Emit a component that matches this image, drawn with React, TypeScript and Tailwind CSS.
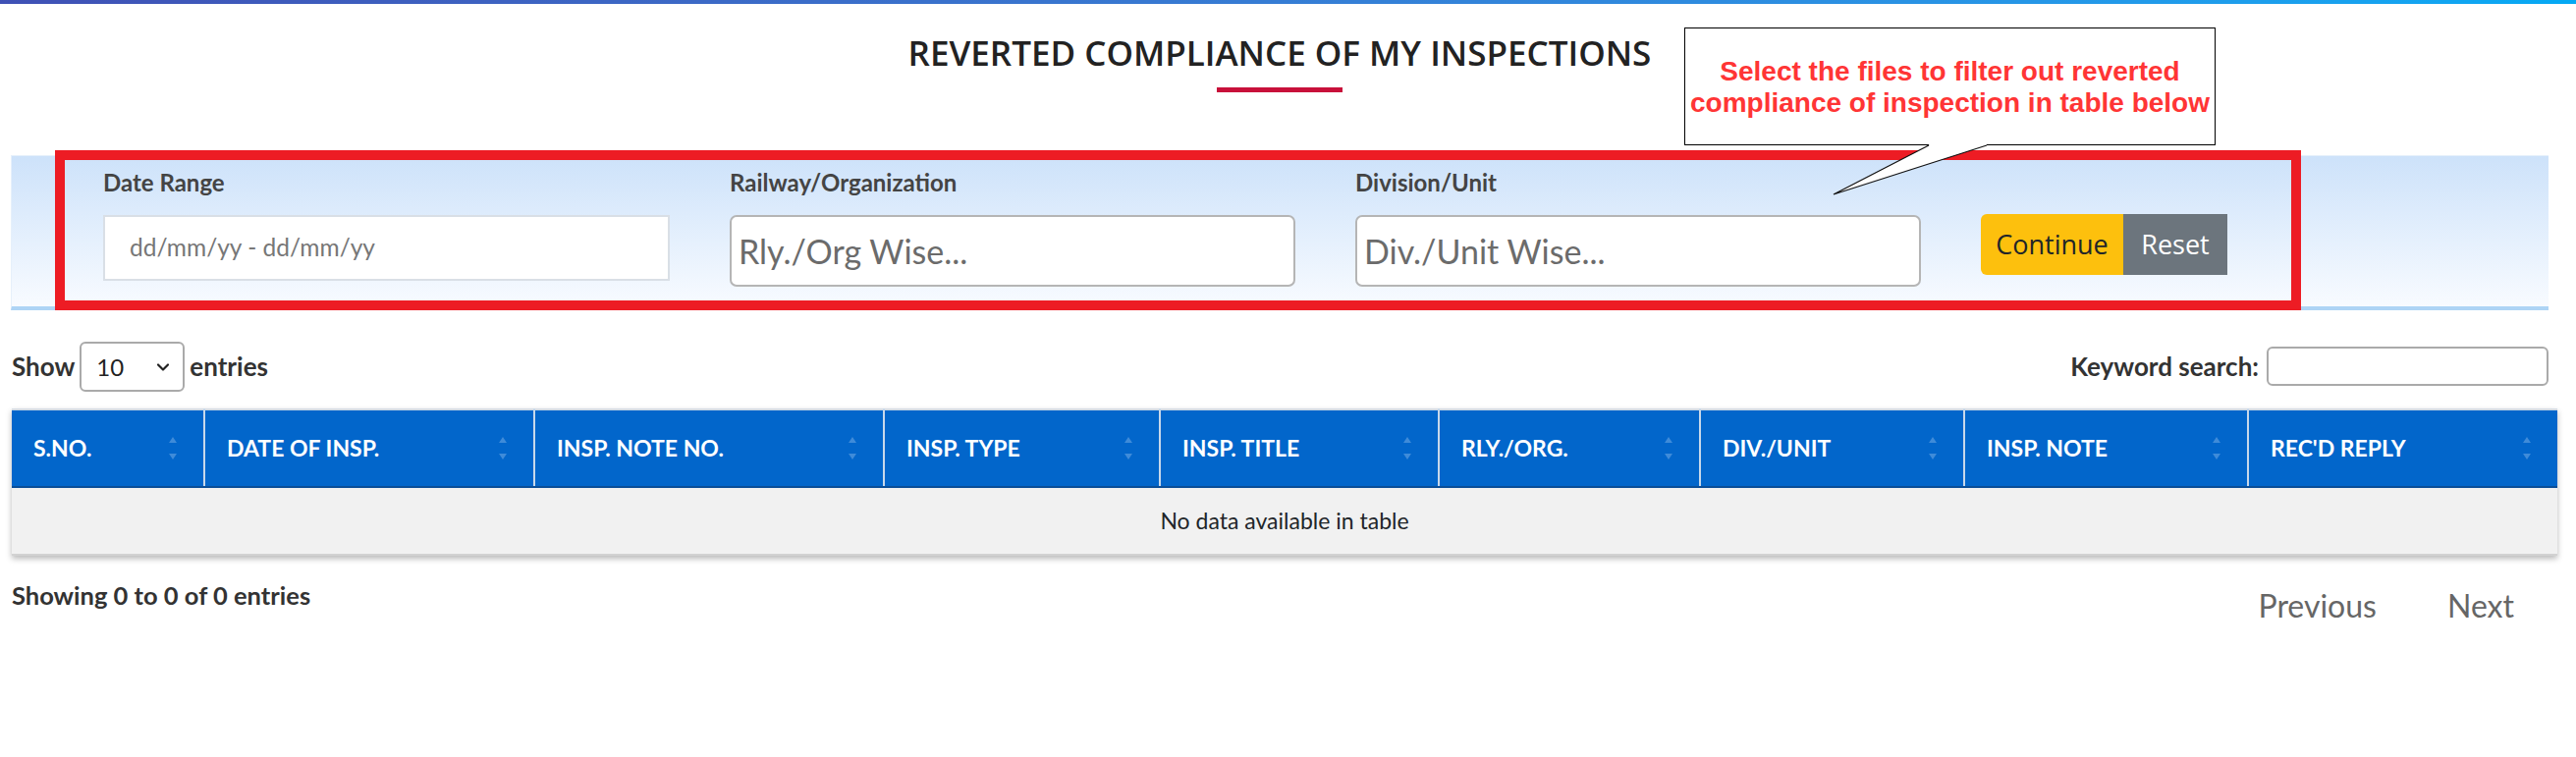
import { ChevronDown } from 'lucide-react';

const COLS: { label: string; w: string }[] = [
  { label: 'S.NO.', w: 'w-[196px]' },
  { label: 'DATE OF INSP.', w: 'w-[336px]' },
  { label: 'INSP. NOTE NO.', w: 'w-[356px]' },
  { label: 'INSP. TYPE', w: 'w-[281px]' },
  { label: 'INSP. TITLE', w: 'w-[284px]' },
  { label: 'RLY./ORG.', w: 'w-[266px]' },
  { label: 'DIV./UNIT', w: 'w-[269px]' },
  { label: 'INSP. NOTE', w: 'w-[289px]' },
  { label: "REC'D REPLY", w: 'w-[315px]' },
];

function SortArrows() {
  return (
    <svg className="absolute right-[26px] top-1/2 -translate-y-1/2" width="10" height="26" viewBox="0 0 10 26">
      <path d="M5 1 L9 7 L1 7 Z" fill="#3f8bd9" />
      <path d="M1 18 L9 18 L5 24 Z" fill="#3f8bd9" />
    </svg>
  );
}

function Callout() {
  return (
    <>
      <div className="absolute left-[1715px] top-[28px] w-[541px] h-[120px] border border-black bg-white z-20 pt-[28px] text-center font-['Liberation_Sans',Arial,sans-serif] font-bold text-[28px] leading-[32px] text-[#ff3535]">
        Select the files to filter out reverted<br />
        compliance of inspection in table below
      </div>
      <svg className="absolute left-[1860px] top-[140px] z-30" width="170" height="62" viewBox="0 0 170 62">
        <polygon points="104.5,6 162.5,6 163,8 7,58 104,8" fill="#fff" />
        <polyline points="104,8 7,58 163,8" fill="none" stroke="#111" strokeWidth="1.3" />
      </svg>
    </>
  );
}

export default function App() {
  return (
    <div className="relative min-h-[771px] bg-white font-['Lato','Noto_Sans',sans-serif] text-[#333]">
      <div className="h-[4px] bg-linear-to-r from-[#3f51b5] to-[#03a9f4]" />

      <Callout />

      <div className="pl-[11px] pr-[28px]">
        {/* heading */}
        <div className="flex flex-col items-center pt-[26px]">
          <h1 className="font-['Open_Sans',sans-serif] font-semibold text-[35px] leading-[48px] text-[#222]">
            REVERTED COMPLIANCE OF MY INSPECTIONS
          </h1>
          <div className="mt-[11px] h-[5px] w-[128px] bg-[#c8103a]" />
        </div>

        {/* filter band */}
        <div className="mt-[64px] bg-linear-to-b from-[#cde2fa] to-[#f8fbff] border-t border-l border-[#e6f0fb] border-b-4 border-b-[#aed4f5] pl-[44px]">
          <div className="relative z-10 -mt-[6px] -mb-[4px] w-[2287px] border-[10px] border-[#ed1c24] pl-[39px] pt-[8px] pb-[14px] flex items-start gap-[61px]">
            <div className="w-[577px]">
              <div className="text-[24px] leading-[29px] font-bold text-[#444]">Date Range</div>
              <div className="mt-[19px] h-[67px] bg-white border-2 border-[#d9dfe6] flex items-center pl-[25px] text-[24.5px] text-[#777]">
                dd/mm/yy - dd/mm/yy
              </div>
            </div>
            <div className="w-[576px]">
              <div className="text-[24px] leading-[29px] font-bold text-[#444]">Railway/Organization</div>
              <div className="mt-[19px] h-[73px] bg-white border-2 border-[#b5b5b5] rounded-[7px] flex items-center pl-[7px] text-[34px] text-[#6b6b6b]">
                Rly./Org Wise...
              </div>
            </div>
            <div className="w-[576px]">
              <div className="text-[24px] leading-[29px] font-bold text-[#444]">Division/Unit</div>
              <div className="mt-[19px] h-[73px] bg-white border-2 border-[#b5b5b5] rounded-[7px] flex items-center pl-[7px] text-[34px] text-[#6b6b6b]">
                Div./Unit Wise...
              </div>
            </div>
            <div className="mt-[47px] flex font-['Open_Sans',sans-serif] text-[27px]">
              <button className="h-[62px] w-[145px] rounded-l-[6px] bg-[#fdc00d] text-[#212529]">Continue</button>
              <button className="h-[62px] w-[106px] bg-[#6c757d] text-white">Reset</button>
            </div>
          </div>
        </div>

        {/* table controls */}
        <div className="mt-[32px] flex items-start justify-between pl-[1px]">
          <div className="flex items-center gap-[5px] text-[26px] font-bold text-[#333]">
            <span>Show</span>
            <div className="h-[51px] w-[107px] rounded-[6px] border-2 border-[#aaa] flex items-center justify-between pl-[15px] pr-[10px] text-[24px] font-normal text-[#222]">
              <span>10</span>
              <ChevronDown size={20} strokeWidth={2.6} />
            </div>
            <span>entries</span>
          </div>
          <div className="mt-[5px] flex items-center gap-[8px] text-[26px] font-bold text-[#333]">
            <span>Keyword search:</span>
            <div className="h-[40px] w-[287px] rounded-[6px] border-2 border-[#aaa] bg-white" />
          </div>
        </div>

        {/* table */}
        <table className="mt-[17px] ml-[1px] w-[2592px] table-fixed border-collapse shadow-[0_3px_6px_rgba(0,0,0,0.28)]">
          <thead>
            <tr className="border-t-2 border-[#d3dbe4] bg-[#0266cb]">
              {COLS.map((c, i) => (
                <th
                  key={c.label}
                  className={`${c.w} relative h-[79px] border-b-2 border-[#0a4e98] ${i > 0 ? 'border-l-2 border-l-[#c8d8ea]' : ''} pl-[22px] text-left text-[23px] font-bold text-white`}
                >
                  {c.label}
                  <SortArrows />
                </th>
              ))}
            </tr>
          </thead>
          <tbody>
            <tr className="bg-[#f1f1f1] border-b-2 border-[#d2d2d2]">
              <td colSpan={9} className="h-[69px] text-center text-[23px] text-[#212529]">
                No data available in table
              </td>
            </tr>
          </tbody>
        </table>

        {/* footer */}
        <div className="mt-[26px] flex items-start justify-between pl-[1px] pr-[35px]">
          <div className="text-[25.5px] leading-[29px] font-bold text-[#333]">Showing 0 to 0 of 0 entries</div>
          <div className="mt-[5px] flex gap-[72px] text-[32px] leading-[40px] text-[#666]">
            <span>Previous</span>
            <span>Next</span>
          </div>
        </div>
      </div>
    </div>
  );
}
